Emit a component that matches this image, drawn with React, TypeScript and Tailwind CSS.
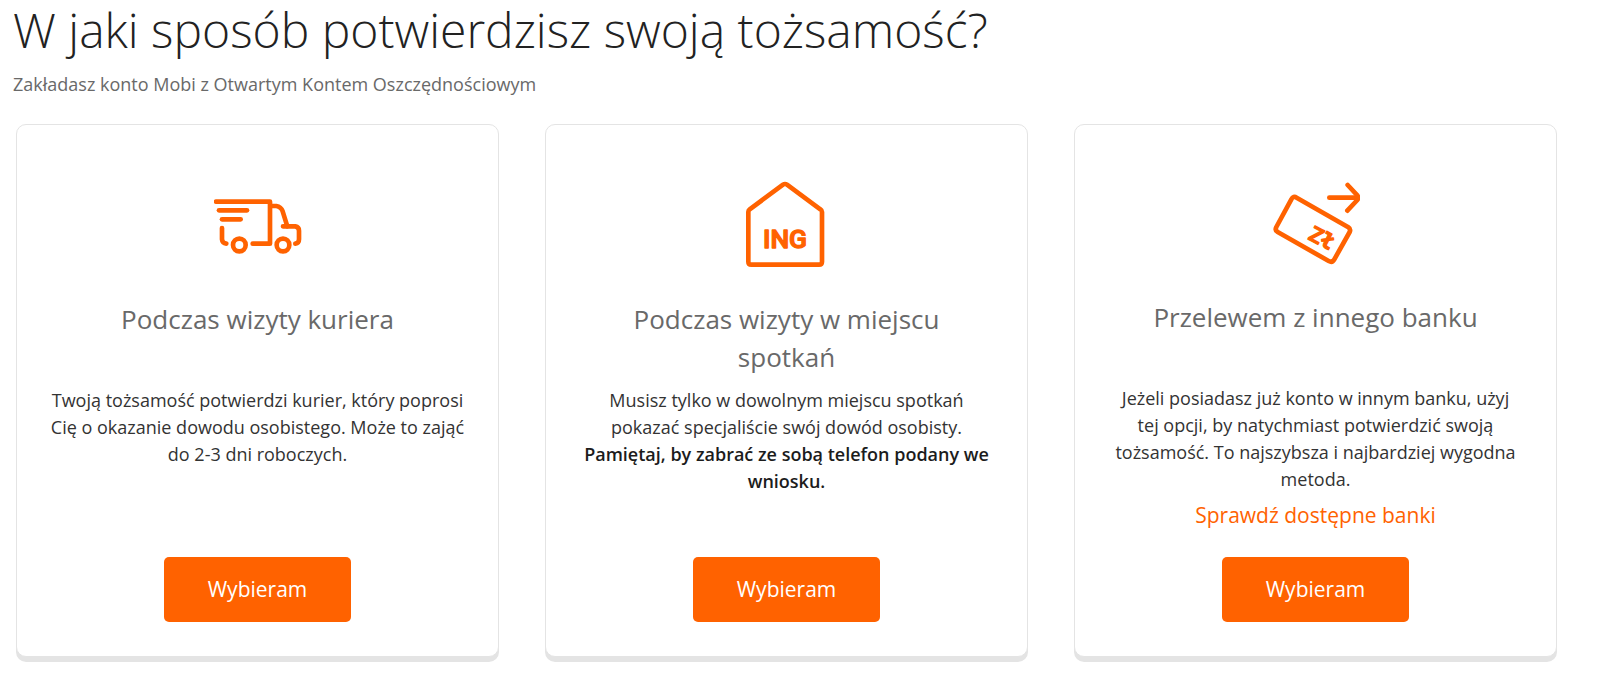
import type { ReactNode } from "react";

function TruckIcon() {
  return (
    <svg viewBox="42 0 264 264" className="size-[88px]" fill="none" stroke="#ff6200" strokeWidth="14" strokeLinecap="round" strokeLinejoin="round" aria-hidden="true">
      <path d="M48 65H210V191H158" />
      <path d="M57 91H141" />
      <path d="M66 118H122" />
      <path d="M66 144V178Q67 190 79 191" />
      <path d="M212 78H229Q243 80 248 94L262 139" />
      <path d="M249 139H286Q297 141 297 152V178Q297 190 286 191" />
      <circle cx="118" cy="195" r="19" />
      <circle cx="249" cy="195" r="19" />
    </svg>
  );
}

function HouseIcon() {
  return (
    <svg viewBox="38 30 264 264" className="size-[88px]" aria-hidden="true">
      <path d="M54 126Q54 121 58 118L158 44Q164 40 170 44L270 118Q275 121 275 126V275Q275 284 266 284H63Q54 284 54 275Z" fill="none" stroke="#ff6200" strokeWidth="14" strokeLinejoin="round" />
      <text x="164" y="234" textAnchor="middle" fontFamily="Roboto, sans-serif" fontWeight="500" fontSize="79" fill="#ff6200" stroke="#ff6200" strokeWidth="4" strokeLinejoin="round">ING</text>
    </svg>
  );
}

function TransferIcon() {
  return (
    <svg viewBox="35 30 264 258" className="h-[86px] w-[88px]" fill="none" stroke="#ff6200" strokeWidth="14" strokeLinecap="round" strokeLinejoin="round" aria-hidden="true">
      <path d="M207 83H292" />
      <path d="M262 45L291 76Q296 83 291 90L261 122" />
      <path d="M109 83L264 172Q272 177 268 186L222 268Q216 279 205 273L52 186Q43 181 48 171L93 88Q99 77 109 83Z" />
      <g transform="translate(141 206) rotate(28)" fill="#ff6200" strokeWidth="4">
        <text fontFamily="Roboto, sans-serif" fontWeight="500" fontSize="64">Z</text>
        <text x="38" fontFamily="DejaVu Sans Mono, monospace" fontWeight="700" fontSize="62">ł</text>
      </g>
    </svg>
  );
}

type CardProps = { icon: ReactNode; title: string; children: ReactNode; link?: string };

function MethodCard({ icon, title, children, link }: CardProps) {
  return (
    <section className="flex flex-col items-center rounded-[10px] border border-[#e4e4e4] bg-white px-6 pt-[55px] pb-[34px] text-center shadow-[0_5px_0_#e4e4e4]">
      {icon}
      <h2 className="mt-8 min-h-[76px] px-9 text-[26px] leading-[38px] text-[#696969]">{title}</h2>
      <div className="mt-[11px] text-[18px] leading-[27px] text-[#333]">{children}</div>
      {link && (
        <a href="#banki" className="mt-[7px] text-[21px] leading-[30px] text-[#ff6200]">{link}</a>
      )}
      <div className="mt-auto pt-2">
        <button type="button" className="h-[65px] w-[187px] rounded-[5px] bg-[#ff6200] text-[21px] text-white">Wybieram</button>
      </div>
    </section>
  );
}

export default function App() {
  return (
    <main className="min-h-screen bg-white pr-[43px] pb-6 pl-4 font-['Open_Sans',sans-serif]">
      <header className="-ml-[3px]">
        <h1 className="text-[48px] leading-[60px] font-light text-[#222]">W jaki sposób potwierdzisz swoją tożsamość?</h1>
        <p className="mt-[10px] text-[18px] leading-[28px] text-[#696969]">Zakładasz konto Mobi z Otwartym Kontem Oszczędnościowym</p>
      </header>
      <div className="mt-[26px] grid min-h-[533px] grid-cols-3 gap-[46px]">
        <MethodCard icon={<TruckIcon />} title="Podczas wizyty kuriera">
          <p>Twoją tożsamość potwierdzi kurier, który poprosi<br />Cię o okazanie dowodu osobistego. Może to zająć<br />do 2-3 dni roboczych.</p>
        </MethodCard>
        <MethodCard icon={<HouseIcon />} title="Podczas wizyty w miejscu spotkań">
          <p>Musisz tylko w dowolnym miejscu spotkań<br />pokazać specjaliście swój dowód osobisty.</p>
          <p className="font-semibold text-[#1c1c1c]">Pamiętaj, by zabrać ze sobą telefon podany we<br />wniosku.</p>
        </MethodCard>
        <MethodCard icon={<TransferIcon />} title="Przelewem z innego banku" link="Sprawdź dostępne banki">
          <p>Jeżeli posiadasz już konto w innym banku, użyj<br />tej opcji, by natychmiast potwierdzić swoją<br />tożsamość. To najszybsza i najbardziej wygodna<br />metoda.</p>
        </MethodCard>
      </div>
    </main>
  );
}
